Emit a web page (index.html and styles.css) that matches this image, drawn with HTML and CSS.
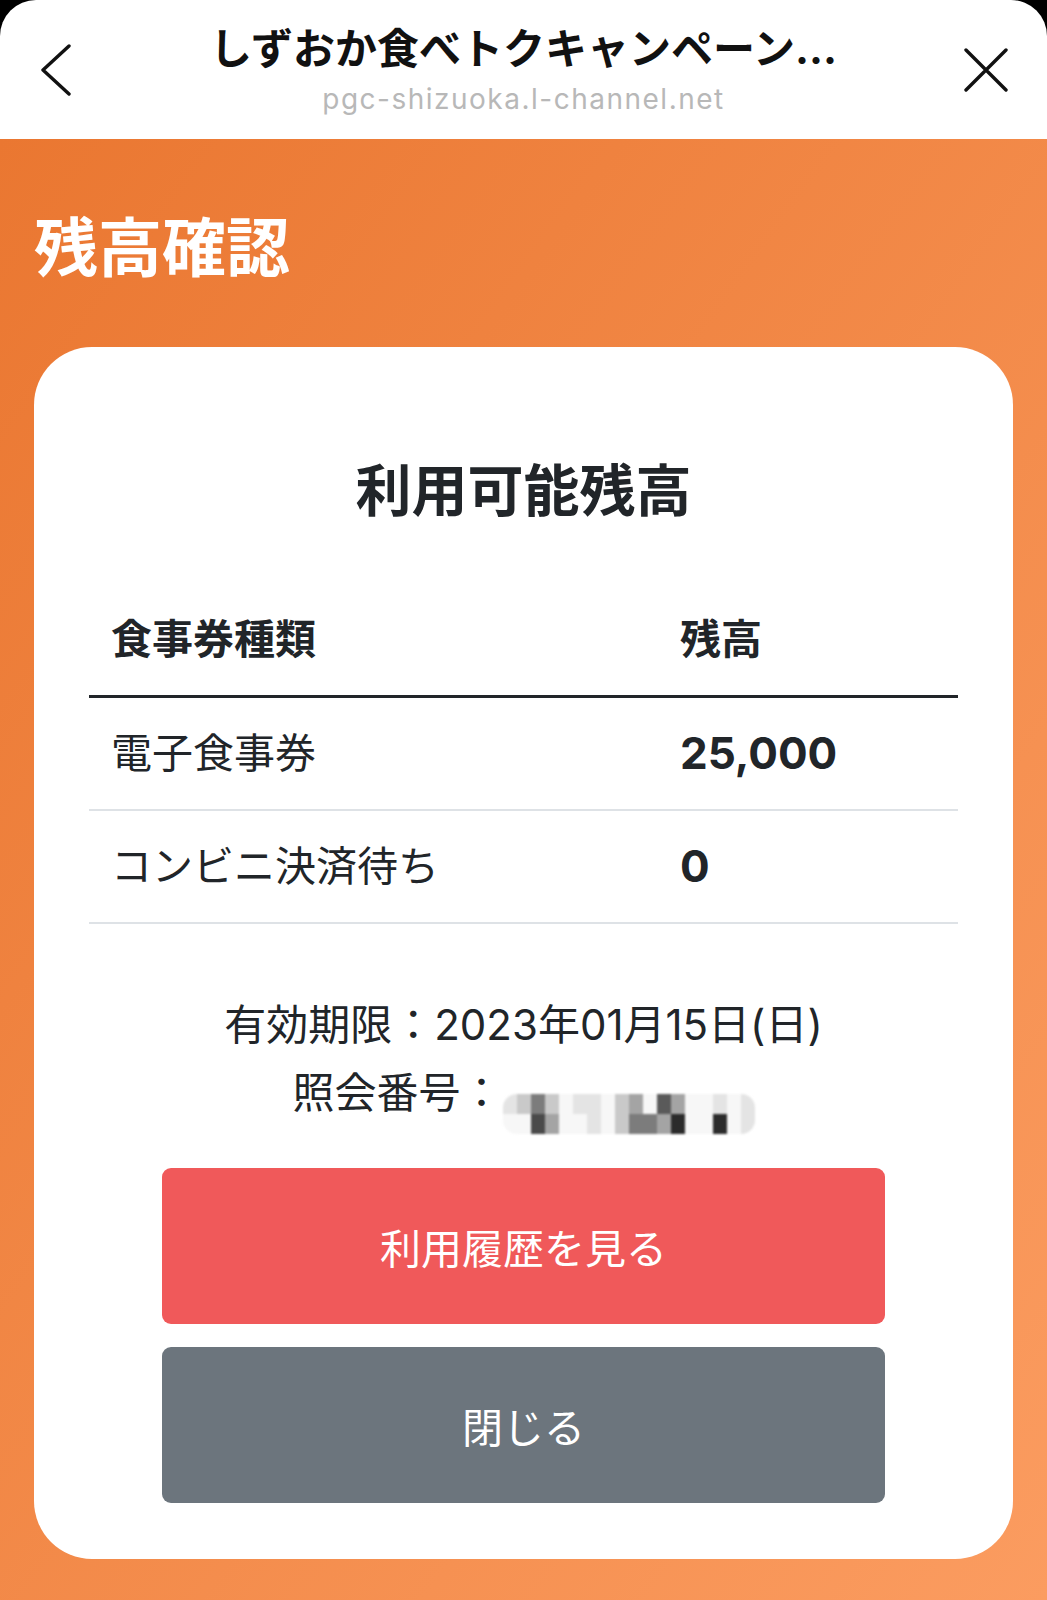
FILE: index.html
```html
<!DOCTYPE html>
<html lang="ja">
<head>
  <meta charset="UTF-8">
  <title>残高確認</title>
  <link rel="stylesheet" href="styles.css">
</head>
<body>
  <div class="sheet">
    <header class="topbar">
      <button class="nav-btn back" aria-label="戻る">
        <svg width="32" height="52" viewBox="0 0 32 52">
          <path d="M29 2 L3 26 L29 50" fill="none" stroke="#111" stroke-width="3.4" stroke-linecap="round" stroke-linejoin="round"/>
        </svg>
      </button>
      <div class="title-block">
        <div class="title">しずおか食べトクキャンペーン...</div>
        <div class="url">pgc-shizuoka.l-channel.net</div>
      </div>
      <button class="nav-btn close" aria-label="閉じる">
        <svg width="44" height="44" viewBox="0 0 44 44">
          <path d="M2 2 L42 42 M42 2 L2 42" fill="none" stroke="#111" stroke-width="3.4" stroke-linecap="round"/>
        </svg>
      </button>
    </header>

    <main class="page">
      <h1 class="page-title">残高確認</h1>

      <section class="card">
        <h2>利用可能残高</h2>

        <table class="balance">
          <thead>
            <tr><th class="col-type">食事券種類</th><th>残高</th></tr>
          </thead>
          <tbody>
            <tr><td>電子食事券</td><td class="amount">25,000</td></tr>
            <tr><td>コンビニ決済待ち</td><td class="amount">0</td></tr>
          </tbody>
        </table>

        <div class="info">
          <p>有効期限：2023年01月15日(日)</p>
          <p>照会番号：<span class="mosaic">
            <i class="m1"></i><i class="m2"></i><i class="m4"></i><i class="m2"></i><i></i><i class="m1"></i><i class="m1"></i><i></i><i class="m2"></i><i class="m3"></i><i></i><i class="m5"></i><i class="m3"></i><i></i><i></i><i class="m1"></i><i></i><i class="m1"></i>
            <i></i><i></i><i class="m6"></i><i class="m3"></i><i></i><i></i><i class="m1"></i><i></i><i class="m2"></i><i class="m4"></i><i class="m4"></i><i class="m3"></i><i class="m7"></i><i></i><i></i><i class="m7"></i><i></i><i class="m1"></i>
          </span></p>
        </div>

        <div class="actions">
          <button class="btn btn-red">利用履歴を見る</button>
          <button class="btn btn-gray">閉じる</button>
        </div>
      </section>
    </main>
  </div>
</body>
</html>
```

FILE: styles.css
```css
html {
  background: #000;
}
body {
  margin: 0;
  font-family: "Inter", "Noto Sans CJK JP", sans-serif;
  color: #212529;
}
.sheet {
  width: 1047px;
  min-height: 1600px;
  display: flex;
  flex-direction: column;
}

/* top bar */
.topbar {
  height: 139px;
  background: #fff;
  border-radius: 36px 36px 0 0;
  display: grid;
  grid-template-columns: 110px 1fr 110px;
  align-items: start;
}
.nav-btn {
  background: none;
  border: none;
  padding: 0;
  display: block;
}
.nav-btn svg {
  display: block;
}
.back {
  margin: 44px 0 0 40px;
}
.close {
  margin: 48px 0 0 27px;
}
.title-block {
  text-align: center;
  padding-top: 25px;
}
.title {
  font-size: 42px;
  line-height: 48px;
  font-weight: 700;
  color: #111;
  white-space: nowrap;
}
.url {
  margin-top: 8px;
  font-size: 28px;
  line-height: 36px;
  letter-spacing: 1.5px;
  color: #b8b8b8;
}

/* orange page */
.page {
  flex: 1;
  background: linear-gradient(to bottom right, #ea7731, #fb9c60);
  padding: 77px 34px 40px;
}
.page-title {
  margin: 0 0 67px;
  font-size: 64px;
  line-height: 64px;
  font-weight: 700;
  color: #fff;
}

/* card */
.card {
  background: #fff;
  border-radius: 58px;
  padding: 116px 55px 56px;
}
.card h2 {
  margin: 0;
  text-align: center;
  font-size: 56px;
  line-height: 56px;
  font-weight: 700;
}

.balance {
  width: 100%;
  margin-top: 65px;
  border-collapse: collapse;
  font-size: 41px;
  line-height: 61px;
}
.balance th,
.balance td {
  padding: 25px 22px;
  text-align: left;
}
.balance th {
  font-weight: 700;
  border-bottom: 3px solid #212529;
}
.balance td {
  border-bottom: 2px solid #dee2e6;
}
.balance .col-type {
  width: 525px;
}
.balance .amount {
  font-weight: 700;
  font-size: 44px;
}

.info {
  margin-top: 67px;
  text-align: center;
  font-size: 42px;
  line-height: 68px;
}
.info p {
  margin: 0;
}
.mosaic {
  display: inline-grid;
  grid-template-columns: repeat(18, 14px);
  grid-template-rows: 20px 20px;
  vertical-align: -6px;
  border-radius: 14px;
  overflow: hidden;
  filter: blur(1.2px);
}
.mosaic i { background: #f7f7f7; }
.mosaic .m1 { background: #e4e4e4; }
.mosaic .m2 { background: #c9c9c9; }
.mosaic .m3 { background: #a4a4a4; }
.mosaic .m4 { background: #7c7c7c; }
.mosaic .m5 { background: #5a5a5a; }
.mosaic .m6 { background: #4a4a4a; }
.mosaic .m7 { background: #2b2b2b; }

/* buttons */
.actions {
  margin: 34px 73px 0;
  display: flex;
  flex-direction: column;
  gap: 23px;
}
.btn {
  height: 156px;
  border: none;
  border-radius: 9px;
  font-family: "Inter", "Noto Sans CJK JP", sans-serif;
  font-size: 41px;
  color: #fff;
}
.btn-red {
  background: #f0595a;
}
.btn-gray {
  background: #6c757d;
}
```
